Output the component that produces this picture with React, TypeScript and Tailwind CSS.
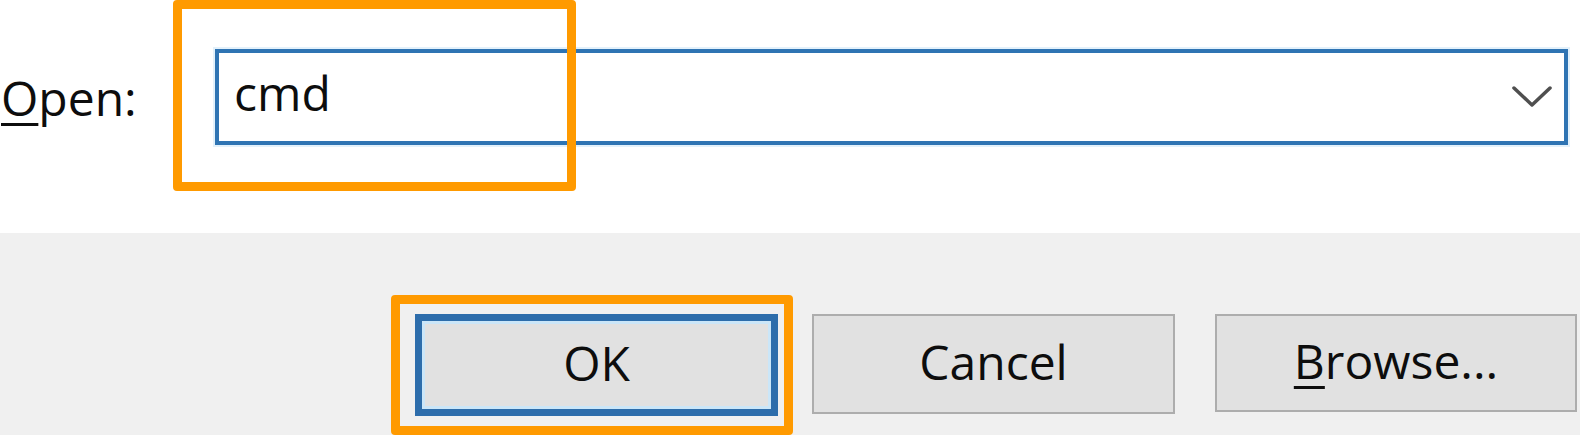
const font = { fontFamily: '"Open Sans", "Noto Sans", sans-serif' };

const Chevron = () => (
  <svg width="40" height="24" viewBox="0 0 40 24" fill="none">
    <polyline
      points="2,3 20,20 38,3"
      stroke="#4f4f4f"
      strokeWidth="3.5"
      strokeLinecap="round"
      strokeLinejoin="round"
    />
  </svg>
);

const RunDialog = () => {
  return (
    <div
      className="relative w-[1580px] h-[435px] overflow-hidden bg-white text-[#0d0d0d]"
      style={font}
    >
      {/* Open row */}
      <div className="flex h-[233px] pt-[49px] bg-white">
        <label className="w-[215px] shrink-0 pl-[1px] h-[96px] leading-[98px] text-[48px]">
          <span className="underline decoration-[3px] underline-offset-[7px]">O</span>
          pen:
        </label>
        <div className="flex w-[1353px] h-[96px] border-[4px] border-[#2f74b3] bg-white shadow-[0_0_0_2px_#e3f1fb]">
          <div className="flex-1 pl-[15px] leading-[79px] text-[48px]">cmd</div>
          <div className="flex items-center pr-[12px]">
            <Chevron />
          </div>
        </div>
      </div>

      {/* Buttons */}
      <div className="flex h-[202px] bg-[#f0f0f0] pt-[81px] pl-[415px]">
        <button className="flex items-center justify-center w-[363px] h-[102px] border-[7px] border-[#2d6dab] bg-[#e1e1e1] shadow-[inset_0_0_0_3px_#cbe6f8] text-[48px] leading-none">
          <span className="-translate-y-[2px]">OK</span>
        </button>
        <button className="ml-[34px] flex items-center justify-center w-[363px] h-[100px] border-[2px] border-[#adadad] bg-[#e1e1e1] text-[48px] leading-none">
          <span className="-translate-y-[2px]">Cancel</span>
        </button>
        <button className="ml-[40px] flex items-center justify-center w-[362px] h-[98px] border-[2px] border-[#adadad] bg-[#e1e1e1] text-[48px] leading-none">
          <span className="-translate-y-[2px]">
            <span className="underline decoration-[3px] underline-offset-[7px]">B</span>
            rowse...
          </span>
        </button>
      </div>

      {/* highlight boxes */}
      <div className="absolute left-[173px] top-0 w-[403px] h-[191px] border-[9px] border-[#ff9a00] rounded-[4px]" />
      <div className="absolute left-[391px] top-[295px] w-[402px] h-[140px] border-[9px] border-[#ff9a00] rounded-[4px]" />
    </div>
  );
};

export default function App() {
  return <RunDialog />;
}
